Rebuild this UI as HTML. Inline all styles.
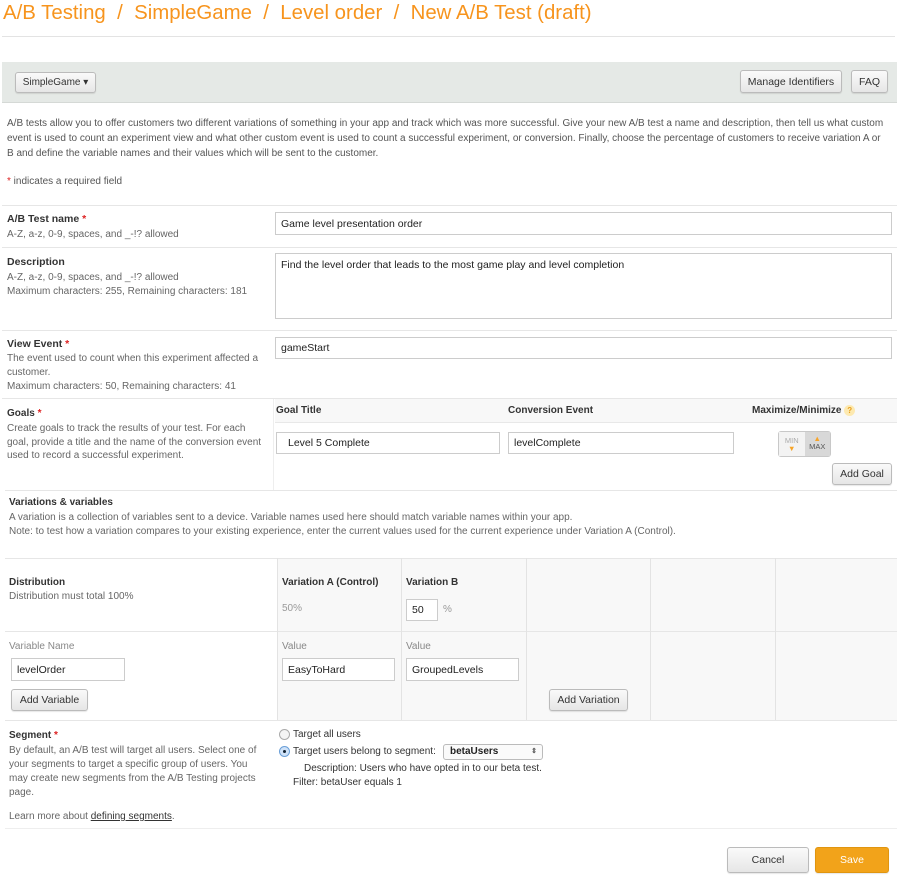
<!DOCTYPE html>
<html><head><meta charset="utf-8">
<style>
*{box-sizing:border-box;margin:0;padding:0}
body{width:900px;height:884px;background:#fff;font-family:"Liberation Sans",Arial,sans-serif;font-size:10px;color:#555;position:relative;overflow:hidden}
.a{position:absolute;white-space:nowrap}
.b{font-weight:bold;color:#333}
.r{color:#d22}
.hr{position:absolute;height:1px;background:#e6e6e6}
.in{position:absolute;border:1px solid #ccc;background:#fff;color:#222;font-size:10.5px;padding:0 5px;display:flex;align-items:center}
.btn{position:absolute;border:1px solid #bbb;border-radius:3px;background:linear-gradient(#fafafa,#e6e6e6);color:#333;font-size:10.5px;display:flex;align-items:center;justify-content:center;box-shadow:0 1px 1px rgba(0,0,0,.1)}
.g{color:#666}
</style></head><body>
<div class="a" style="left:3px;top:2px;font-size:20.4px;color:#f7941d">A/B Testing &nbsp;/&nbsp; SimpleGame &nbsp;/&nbsp; Level order &nbsp;/&nbsp; New A/B Test (draft)</div>
<div class="hr" style="left:2px;top:36px;width:893px;background:#e3e3e3"></div>
<div class="a" style="left:2px;top:62px;width:895px;height:41px;background:#e5e9e6;border-bottom:1px solid #d5d9d6"></div>
<div class="btn" style="left:15px;top:72px;width:81px;height:21px;font-size:10px">SimpleGame ▾</div>
<div class="btn" style="left:740px;top:70px;width:102px;height:23px">Manage Identifiers</div>
<div class="btn" style="left:851px;top:70px;width:37px;height:23px">FAQ</div>
<div class="a" style="left:7px;top:116px;line-height:15px;color:#555;font-size:10px;white-space:normal;width:880px">A/B tests allow you to offer customers two different variations of something in your app and track which was more successful. Give your new A/B test a name and description, then tell us what custom event is used to count an experiment view and what other custom event is used to count a successful experiment, or conversion. Finally, choose the percentage of customers to receive variation A or B and define the variable names and their values which will be sent to the customer.</div>
<div class="a" style="left:7px;top:176px"><span class="r">*</span> indicates a required field</div>

<div class="hr" style="left:2px;top:205px;width:895px"></div>
<div class="a b" style="left:7px;top:213px;font-size:10.5px">A/B Test name <span class="r">*</span></div>
<div class="a g" style="left:7px;top:229px">A-Z, a-z, 0-9, spaces, and _-!? allowed</div>
<div class="in" style="left:275px;top:212px;width:617px;height:23px">Game level presentation order</div>

<div class="hr" style="left:2px;top:247px;width:895px"></div>
<div class="a b" style="left:7px;top:256px;font-size:10.5px">Description</div>
<div class="a g" style="left:7px;top:271px;line-height:14px">A-Z, a-z, 0-9, spaces, and _-!? allowed<br>Maximum characters: 255, Remaining characters: 181</div>
<div class="in" style="left:275px;top:253px;width:617px;height:66px;align-items:flex-start;padding-top:5px">Find the level order that leads to the most game play and level completion</div>

<div class="hr" style="left:2px;top:330px;width:895px"></div>
<div class="a b" style="left:7px;top:338px;font-size:10.5px">View Event <span class="r">*</span></div>
<div class="a g" style="left:7px;top:352px;line-height:14px">The event used to count when this experiment affected a<br>customer.<br>Maximum characters: 50, Remaining characters: 41</div>
<div class="in" style="left:275px;top:337px;width:617px;height:22px">gameStart</div>

<div class="hr" style="left:2px;top:398px;width:895px"></div>
<div class="a" style="left:275px;top:399px;width:622px;height:24px;background:#f8f8f8;border-bottom:1px solid #e8e8e8"></div>
<div class="a" style="left:273px;top:399px;width:1px;height:91px;background:#eee"></div>
<div class="a b" style="left:7px;top:408px">Goals <span class="r">*</span></div>
<div class="a g" style="left:7px;top:422px;line-height:13.5px">Create goals to track the results of your test. For each<br>goal, provide a title and the name of the conversion event<br>used to record a successful experiment.</div>
<div class="a b" style="left:276px;top:405px">Goal Title</div>
<div class="a b" style="left:508px;top:405px">Conversion Event</div>
<div class="a b" style="left:752px;top:405px">Maximize/Minimize <span style="display:inline-block;width:11px;height:11px;border-radius:50%;background:#fde9b0;color:#e8a020;font-size:8px;text-align:center;line-height:11px;vertical-align:middle">?</span></div>
<div class="in" style="left:276px;top:432px;width:224px;height:22px;padding-left:11px">Level 5 Complete</div>
<div class="in" style="left:508px;top:432px;width:226px;height:22px">levelComplete</div>
<div class="a" style="left:778px;top:431px;width:53px;height:26px;border:1px solid #c8c8c8;border-radius:3px;background:#eee;display:flex;font-size:7.5px">
<div style="width:26px;background:#f3f3f3;color:#aaa;text-align:center;line-height:8px;padding-top:5px">MIN<br><span style="color:#f7a428">▼</span></div>
<div style="width:26px;background:#d8d8d8;color:#555;text-align:center;line-height:8px;padding-top:3px"><span style="color:#f7a428">▲</span><br>MAX</div></div>
<div class="btn" style="left:832px;top:463px;width:60px;height:22px">Add Goal</div>

<div class="hr" style="left:5px;top:490px;width:892px"></div>
<div class="a b" style="left:9px;top:497px">Variations &amp; variables</div>
<div class="a g" style="left:9px;top:511px;line-height:13.5px">A variation is a collection of variables sent to a device. Variable names used here should match variable names within your app.<br>Note: to test how a variation compares to your existing experience, enter the current values used for the current experience under Variation A (Control).</div>

<div class="a" style="left:277px;top:558px;width:620px;height:162px;background:#f8f8f8"></div>
<div class="hr" style="left:5px;top:558px;width:892px"></div>
<div class="hr" style="left:5px;top:631px;width:892px"></div>
<div class="hr" style="left:5px;top:720px;width:892px"></div>
<div class="a" style="left:277px;top:558px;width:1px;height:162px;background:#e3e3e3"></div>
<div class="a" style="left:401px;top:558px;width:1px;height:162px;background:#e3e3e3"></div>
<div class="a" style="left:526px;top:558px;width:1px;height:162px;background:#e3e3e3"></div>
<div class="a" style="left:650px;top:558px;width:1px;height:162px;background:#e3e3e3"></div>
<div class="a" style="left:775px;top:558px;width:1px;height:162px;background:#e3e3e3"></div>
<div class="a b" style="left:9px;top:577px">Distribution</div>
<div class="a g" style="left:9px;top:591px">Distribution must total 100%</div>
<div class="a b" style="left:282px;top:577px">Variation A (Control)</div>
<div class="a" style="left:282px;top:603px;color:#999">50%</div>
<div class="a b" style="left:406px;top:577px">Variation B</div>
<div class="in" style="left:406px;top:599px;width:32px;height:22px">50</div>
<div class="a" style="left:443px;top:604px;color:#999">%</div>
<div class="a" style="left:9px;top:641px;color:#888">Variable Name</div>
<div class="a" style="left:282px;top:641px;color:#888">Value</div>
<div class="a" style="left:406px;top:641px;color:#888">Value</div>
<div class="in" style="left:11px;top:658px;width:114px;height:23px">levelOrder</div>
<div class="in" style="left:282px;top:658px;width:113px;height:23px">EasyToHard</div>
<div class="in" style="left:406px;top:658px;width:113px;height:23px">GroupedLevels</div>
<div class="btn" style="left:11px;top:689px;width:77px;height:22px">Add Variable</div>
<div class="btn" style="left:549px;top:689px;width:79px;height:22px">Add Variation</div>

<div class="a b" style="left:9px;top:730px">Segment <span class="r">*</span></div>
<div class="a g" style="left:9px;top:744px;line-height:14px">By default, an A/B test will target all users. Select one of<br>your segments to target a specific group of users. You<br>may create new segments from the A/B Testing projects<br>page.</div>
<div class="a g" style="left:9px;top:811px">Learn more about <span style="color:#333;text-decoration:underline">defining segments</span>.</div>
<div class="a" style="left:279px;top:729px;width:11px;height:11px;border:1px solid #aaa;border-radius:50%;background:#f4f4f4"></div>
<div class="a" style="left:293px;top:729px;color:#333">Target all users</div>
<div class="a" style="left:279px;top:746px;width:11px;height:11px;border:1px solid #6a9fd8;border-radius:50%;background:#cfe2f8"><div style="width:3px;height:3px;background:#123;border-radius:50%;margin:3px"></div></div>
<div class="a" style="left:293px;top:746px;color:#333">Target users belong to segment:</div>
<div class="a" style="left:443px;top:744px;width:100px;height:16px;border:1px solid #bbb;border-radius:3px;background:#fafafa;font-weight:bold;color:#222;padding-left:6px;line-height:14px">betaUsers<span style="position:absolute;right:5px;font-size:7px;color:#555">⇕</span></div>
<div class="a" style="left:304px;top:763px;color:#333">Description: Users who have opted in to our beta test.</div>
<div class="a" style="left:293px;top:777px;color:#333">Filter: betaUser equals 1</div>

<div class="hr" style="left:5px;top:828px;width:892px;background:#eee"></div>
<div class="btn" style="left:727px;top:847px;width:82px;height:26px">Cancel</div>
<div class="btn" style="left:815px;top:847px;width:74px;height:26px;background:#f2a31a;border-color:#e09510;color:#fff">Save</div>
</body></html>
